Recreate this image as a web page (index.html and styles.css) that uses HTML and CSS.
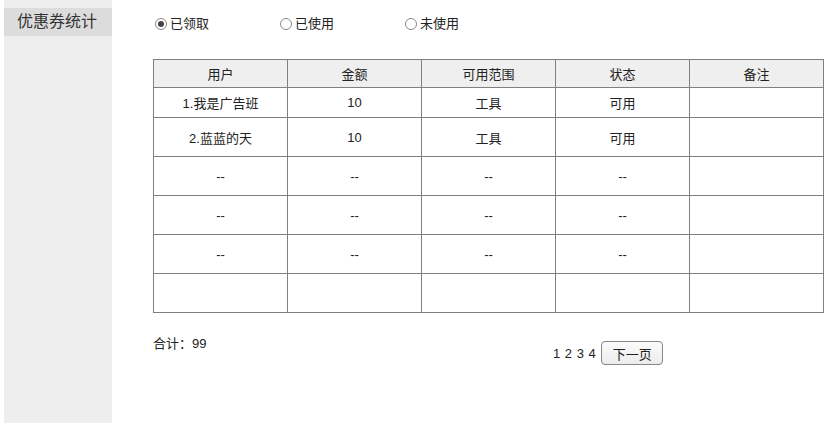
FILE: index.html
```html
<!DOCTYPE html>
<html lang="zh">
<head>
<meta charset="utf-8">
<title>优惠券统计</title>
<link rel="stylesheet" href="styles.css">
</head>
<body>
<div class="page">
  <aside class="sidebar">
    <div class="side-title">优惠券统计</div>
  </aside>
  <main class="main">
    <div class="filters">
      <label class="radio checked"><span class="dot"></span>已领取</label>
      <label class="radio"><span class="dot"></span>已使用</label>
      <label class="radio"><span class="dot"></span>未使用</label>
    </div>
    <table class="grid">
      <thead>
        <tr class="head"><th>用户</th><th>金额</th><th>可用范围</th><th>状态</th><th>备注</th></tr>
      </thead>
      <tbody>
        <tr class="r1"><td>1.我是广告班</td><td>10</td><td>工具</td><td>可用</td><td></td></tr>
        <tr class="r3"><td>2.蓝蓝的天</td><td>10</td><td>工具</td><td>可用</td><td></td></tr>
        <tr class="r3"><td>--</td><td>--</td><td>--</td><td>--</td><td></td></tr>
        <tr class="r3"><td>--</td><td>--</td><td>--</td><td>--</td><td></td></tr>
        <tr class="r3"><td>--</td><td>--</td><td>--</td><td>--</td><td></td></tr>
        <tr class="r3"><td></td><td></td><td></td><td></td><td></td></tr>
      </tbody>
    </table>
    <div class="footer">
      <div class="total">合计：99</div>
      <div class="pager">
        <span class="pages">1 2 3 4</span>
        <button class="next">下一页</button>
      </div>
    </div>
  </main>
</div>
</body>
</html>
```
FILE: styles.css
```css
html, body {
  margin: 0;
  padding: 0;
  background: #fff;
}
body {
  font-family: "Liberation Sans", "Noto Sans CJK SC", sans-serif;
  font-size: 13px;
  color: #222;
}
.page {
  display: flex;
  height: 423px;
}
.sidebar {
  margin-left: 4px;
  width: 108px;
  background: #eeeeee;
  padding-top: 8px;
  box-sizing: border-box;
}
.side-title {
  height: 28px;
  background: #dcdcdc;
  font-size: 16px;
  line-height: 28px;
  padding-left: 13px;
  color: #333;
}
.main {
  padding-left: 41px;
  flex: 1;
}
.filters {
  display: flex;
  margin-top: 15px;
  height: 18px;
  align-items: center;
}
.radio {
  width: 125px;
  display: flex;
  align-items: center;
  margin-left: 2px;
  margin-right: -2px;
  line-height: 18px;
}
.dot {
  width: 10px;
  height: 10px;
  border: 1px solid #888;
  border-radius: 50%;
  background: #fff;
  margin-right: 3px;
  position: relative;
  box-sizing: content-box;
}
.radio.checked .dot::after {
  content: "";
  position: absolute;
  left: 2px;
  top: 2px;
  width: 6px;
  height: 6px;
  border-radius: 50%;
  background: #444;
}
.grid {
  margin-top: 26px;
  border-collapse: collapse;
  table-layout: fixed;
}
.grid th, .grid td {
  border: 1px solid #808080;
  width: 133px;
  text-align: center;
  padding: 0;
  font-weight: normal;
  font-size: 13px;
  color: #222;
}
.grid th {
  background: #efefef;
}
.head th { height: 27px; }
.r1 td { height: 29px; }
.r3 td { height: 38px; }
.footer {
  display: flex;
  align-items: flex-start;
  margin-top: 22px;
}
.total {
  width: 400px;
  line-height: 18px;
}
.pager {
  display: flex;
  align-items: center;
  margin-top: 6px;
}
.pages {
  letter-spacing: 0.5px;
  margin-right: 5px;
}
.next {
  width: 62px;
  height: 24px;
  border: 1px solid #888;
  border-radius: 4px;
  background: linear-gradient(#fbfbfb, #ececec);
  font-family: "Liberation Sans", "Noto Sans CJK SC", sans-serif;
  font-size: 13px;
  color: #222;
  padding: 0;
}
```
